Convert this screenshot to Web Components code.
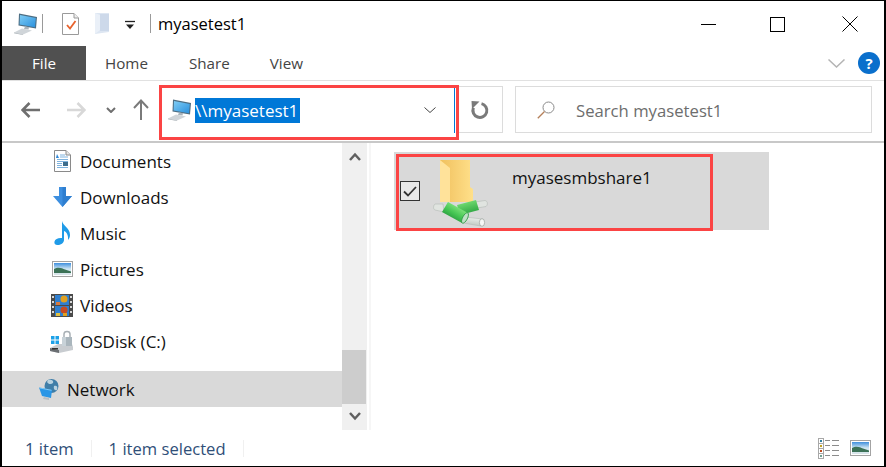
<!DOCTYPE html>
<html><head><meta charset="utf-8"><style>
html,body{margin:0;padding:0;background:#fff}
body{font-family:"Open Sans","Noto Sans",sans-serif;width:886px;height:467px;overflow:hidden}
</style></head><body>
<x-window>
  <x-titlebar title-text="myasetest1"></x-titlebar>
  <x-ribbon></x-ribbon>
  <x-addressbar path="\\myasetest1" search="Search myasetest1"></x-addressbar>
  <x-main>
    <x-navtree slot="nav">
      <x-nav-item icon="docs">Documents</x-nav-item>
      <x-nav-item icon="down">Downloads</x-nav-item>
      <x-nav-item icon="music">Music</x-nav-item>
      <x-nav-item icon="pics">Pictures</x-nav-item>
      <x-nav-item icon="video">Videos</x-nav-item>
      <x-nav-item icon="disk">OSDisk (C:)</x-nav-item>
      <x-nav-item icon="net" selected>Network</x-nav-item>
    </x-navtree>
    <x-file-item slot="content">myasesmbshare1</x-file-item>
  </x-main>
  <x-statusbar></x-statusbar>
</x-window>
<script>
const ICONS={
pc:`<svg width="25" height="22" viewBox="0 0 25 22"><defs><linearGradient id="s" x1="0" y1="0" x2="1" y2="1"><stop offset="0" stop-color="#7fcdf5"/><stop offset="1" stop-color="#2a90dd"/></linearGradient></defs><path d="M6 0.5 24 4 23 15.500 5.500 12.500Z" fill="#4d6d82"/><path d="M7 2 22.800 5 22 14.300 6.600 11.400Z" fill="url(#s)"/><path d="M12 13.500 16 14 15.500 16.500 11 16Z" fill="#aab3ba"/><path d="M1 19.500 9 15.500 19 17.500 10 21.500Z" fill="#d0d5d9"/><path d="M1 19.500 10 21.500 10 22 1 20.300Z" fill="#a3abb1"/></svg>`,
docs:`<svg width="17" height="22" viewBox="0 0 17 22"><path d="M.5.5H12L16.500 5V21.500H.5Z" fill="#fff" stroke="#8a8a8a"/><path d="M12 .5V5H16.500" fill="#e6e6e6" stroke="#8a8a8a"/><path d="M3 4 5 8H2Z" fill="#2c86d8"/><path d="M6 5H11M6 7H14M3 9.500H14M3 11.500H14M3 13.500H8M3 15.500H8M3 17.500H14" stroke="#7fb3de"/><rect x="9" y="12" width="5" height="4" fill="#3d6d8c"/></svg>`,
down:`<svg width="19" height="20" viewBox="0 0 19 20"><path d="M6 0H13V9H19L9.500 20 0 9H6Z" fill="#3d8fe0"/><path d="M9.500 0H13V9H19L9.500 20Z" fill="#2f7fd0"/></svg>`,
music:`<svg width="17" height="24" viewBox="0 0 17 24"><path d="M8 0C9 5 16 7 16 14 16 16 15 18 14 19 14.500 15 13 11 10 10V19C10 22 6.500 24 3.500 24 1 24 0 22.500 .5 20.500 1 18 4.500 16.500 8 17Z" fill="#1f9be8"/></svg>`,
pics:`<svg width="21" height="16" viewBox="0 0 21 16"><rect x=".5" y=".5" width="20" height="15" fill="#fff" stroke="#a3a3a3"/><defs><linearGradient id="p" x1="0" y1="0" x2="0" y2="1"><stop offset="0" stop-color="#3f8fdd"/><stop offset=".5" stop-color="#cfe6f2"/><stop offset="1" stop-color="#d8e4e8"/></linearGradient></defs><rect x="2" y="2" width="17" height="12" fill="url(#p)"/><path d="M2 8C6 5.500 10 7 13 8.500L19 10.500V12H2Z" fill="#3c7257"/></svg>`,
video:`<svg width="22" height="23" viewBox="0 0 22 23"><rect width="22" height="23" fill="#4a4a4a"/><g fill="#d8d8d8"><rect x="1" y="2" width="2" height="2"/><rect x="1" y="7" width="2" height="2"/><rect x="1" y="12" width="2" height="2"/><rect x="1" y="17" width="2" height="2"/><rect x="19" y="2" width="2" height="2"/><rect x="19" y="7" width="2" height="2"/><rect x="19" y="12" width="2" height="2"/><rect x="19" y="17" width="2" height="2"/></g><rect x="4" y="1" width="14" height="10" fill="#2f7fd0"/><rect x="4" y="12" width="14" height="10" fill="#2f7fd0"/><circle cx="13" cy="5" r="3.500" fill="#e0a020"/><circle cx="13" cy="16" r="3.500" fill="#c84a20"/><rect x="5" y="8" width="4" height="3" fill="#d87a40"/><rect x="5" y="19" width="4" height="3" fill="#e0c040"/><rect x="12" y="19" width="4" height="3" fill="#e0a020"/></svg>`,
disk:`<svg width="24" height="23" viewBox="0 0 24 23"><path d="M0 18 8 14H22L23 17V20L9 23 0 21Z" fill="#c8ccd0"/><path d="M0 18 9 20V23L0 21Z" fill="#6b6f73"/><path d="M2 18H8V19.500H2Z" fill="#333"/><g fill="#1da1e8"><rect x="1" y="6" width="3.500" height="3.500"/><rect x="5.500" y="6" width="3.500" height="3.500"/><rect x="1" y="10.500" width="3.500" height="3.500"/><rect x="5.500" y="10.500" width="3.500" height="3.500"/></g><path d="M14 7V4C14 .5 20 .5 20 4V7" fill="none" stroke="#a9b0b5" stroke-width="1.500"/><rect x="12" y="7" width="10" height="9" fill="#c8d2d8"/><rect x="16" y="7" width="6" height="9" fill="#aab6bd"/></svg>`,
net:`<svg width="22" height="21" viewBox="0 0 22 21"><circle cx="12.500" cy="7" r="7" fill="#3f7ea8"/><path d="M9 1C13 0 15 2 14 4 12 6 9 5 8 3ZM15 7C18 6 19 8 18 11 16 12 14 10 15 7Z" fill="#b8d2e0"/><path d="M0 8.500 13 11 12 19 3 17Z" fill="#2a96e6"/><path d="M1 9 12.500 11.300" stroke="#7dc8f5"/><path d="M5 18 10 19 10 21 4 20Z" fill="#b8bec3"/></svg>`,
check:`<svg width="17" height="22" viewBox="0 0 17 22"><path d="M.5.5H12L16.500 5V21.500H.5Z" fill="#fff" stroke="#9a9a9a"/><path d="M12 .5V5H16.500" fill="#eee" stroke="#9a9a9a"/><path d="M5 12 8 15.500 13.500 8" fill="none" stroke="#e8622c" stroke-width="1.800"/></svg>`,
folderpale:`<svg width="15" height="21" viewBox="0 0 15 21"><path d="M0 0H14V19L0 21Z" fill="#dde6f2"/><path d="M5 1H14V18H5Z" fill="#cdd9ea"/><path d="M0 0 5 2V17L0 21Z" fill="#eaf0f8"/></svg>`,
share:`<svg width="56" height="68" viewBox="0 0 56 68"><defs><linearGradient id="f1" x1="0" y1="0" x2="1" y2="0"><stop offset="0" stop-color="#f0c05e"/><stop offset="1" stop-color="#ffe08a"/></linearGradient>
<linearGradient id="ga" gradientUnits="userSpaceOnUse" x1="15" y1="42" x2="9" y2="52"><stop offset="0" stop-color="#74dd74"/><stop offset=".55" stop-color="#46c654"/><stop offset="1" stop-color="#2fa544"/></linearGradient>
<linearGradient id="gb" gradientUnits="userSpaceOnUse" x1="33" y1="42" x2="36" y2="53"><stop offset="0" stop-color="#70da70"/><stop offset="1" stop-color="#33aa46"/></linearGradient>
<linearGradient id="gp" gradientUnits="userSpaceOnUse" x1="40" y1="56" x2="39" y2="65"><stop offset="0" stop-color="#f2f5f2"/><stop offset="1" stop-color="#c2ccc4"/></linearGradient></defs>
<path d="M7 0H37V27L40 29V42H7Z" fill="url(#f1)"/><path d="M7 0 17 8V42H7Z" fill="#ffe29a"/>
<path d="M10 44 2 44 C0 46 0 49 2 50 L11 52Z" fill="#e0e4e0" stroke="#b4bab5" stroke-width=".6"/>
<path d="M42 42 52 40.500 C55 41 55 45 53 46.500 L44 48Z" fill="#e0e4e0" stroke="#b4bab5" stroke-width=".6"/>
<path d="M24 45 43 40 46 50 27 55Z" fill="url(#gb)"/>
<path d="M31 57 50 59 48 66 30 63Z" fill="url(#gp)" stroke="#b4bab5" stroke-width=".6"/>
<ellipse cx="49" cy="62.500" rx="2.600" ry="3.800" fill="#f6f7f6" stroke="#a2a8a3" stroke-width=".8"/>
<path d="M15 42 35 53 29 63 9 52Z" fill="url(#ga)"/>
<ellipse cx="32" cy="58" rx="2.400" ry="5.800" fill="#bfe0c6" stroke="#2c9a42" stroke-width=".8" transform="rotate(28 32 58)"/></svg>`
};
function def(name,html){customElements.define(name,class extends HTMLElement{
  constructor(){super();this.attachShadow({mode:'open'});}
  connectedCallback(){this.shadowRoot.innerHTML=typeof html==='function'?html(this):html;}
});}
def('x-window',`<style>:host{display:flex;flex-direction:column;box-sizing:border-box;width:886px;height:467px;border:solid #000;border-width:1px 2px 1px 2px;background:#fff;position:relative}</style><slot></slot>`);
def('x-titlebar',h=>`<style>
:host{display:flex;align-items:center;height:45px;flex:none;color:#000}
.sep{width:1px;height:19px;background:#9a9a9a}
.t{font-size:16.500px}
svg{display:block}
</style>
<span style="margin:0 0 0 11px;width:25px;height:22px;display:block">${ICONS.pc}</span>
<span class="sep" style="margin-left:4px"></span>
<span style="margin-left:19px">${ICONS.check}</span>
<span style="margin:0 0 0 16px">${ICONS.folderpale}</span>
<svg style="margin:2px 0 0 15px" width="10" height="10" viewBox="0 0 10 10"><path d="M0 1.500H10" stroke="#222" stroke-width="1.300"/><path d="M1 4.500H9L5 9Z" fill="#222"/></svg>
<span class="sep" style="margin-left:15px"></span>
<span class="t" style="margin-left:7px;flex:1">${h.getAttribute('title-text')}</span>
<svg width="15" height="1" style="margin-right:54px;margin-top:1px"><rect width="15" height="1"/></svg>
<svg width="15" height="15" style="margin-right:57px;margin-top:1px"><rect x=".5" y=".5" width="14" height="14" fill="none" stroke="#000"/></svg>
<svg width="16" height="16" style="margin-right:26px;margin-top:1px" viewBox="0 0 16 16"><path d="M.5.5 15.500 15.500M15.500.5 .5 15.500" stroke="#000" stroke-width="1"/></svg>`);
def('x-ribbon',`<style>
:host{display:flex;align-items:stretch;height:35px;flex:none;box-sizing:border-box;border-bottom:1px solid #e1e1e1;font-size:15.200px;color:#444}
.f{width:84px;background:#505050;color:#fff;display:flex;align-items:center;justify-content:center}
.tb{display:flex;align-items:center}
svg{display:block}
</style>
<div class="f">File</div>
<div class="tb" style="margin-left:19px">Home</div>
<div class="tb" style="margin-left:41px">Share</div>
<div class="tb" style="margin-left:40px;flex:1">View</div>
<div class="tb" style="margin-right:13px"><svg width="17" height="9" viewBox="0 0 17 9"><path d="M.5.5 8.500 8 16.500.5" fill="none" stroke="#b4b4b4" stroke-width="1.500"/></svg></div>
<div class="tb" style="margin-right:4px"><svg width="22" height="22" viewBox="0 0 22 22"><circle cx="11" cy="11" r="11" fill="#0a6fcc"/><text x="11" y="16.500" text-anchor="middle" font-family="Open Sans" font-weight="700" font-size="15" fill="#fff">?</text></svg></div>`);
def('x-addressbar',h=>`<style>
:host{display:flex;align-items:center;height:62px;flex:none;box-sizing:border-box;border-bottom:2px solid #c8c8c8;position:relative;padding-bottom:3px}
svg{display:block}
.addr{margin-left:13px;width:297px;height:47px;display:flex;align-items:center;position:relative;box-sizing:border-box;font-size:17px}
.sel{background:#0078d7;color:#fff;height:25px;line-height:25px;margin-left:3px;width:105px;margin-top:1px;box-sizing:border-box;white-space:nowrap}
.red{position:absolute;left:-3px;top:-1px;width:300px;height:55px;box-sizing:border-box;border:3px solid #fb4444;pointer-events:none}
.caret{position:absolute;left:292px;top:1px;width:1px;height:46px;background:#0078d7}
.ref{width:44px;height:47px;box-sizing:border-box;border:1px solid #dcdcdc;border-left:0;display:flex;align-items:center;justify-content:center;padding-right:2px}
.search{margin-left:12px;width:357px;height:47px;box-sizing:border-box;border:1px solid #dcdcdc;display:flex;align-items:center;padding-left:21px;font-size:16.700px;color:#6d6d6d}
</style>
<svg style="margin-left:19px" width="19" height="16" viewBox="0 0 19 16"><path d="M1.500 8H19M8.500 1 1.500 8 8.500 15" fill="none" stroke="#6f6f6f" stroke-width="2.600"/></svg>
<svg style="margin-left:27px" width="19" height="16" viewBox="0 0 19 16"><path d="M0 8H17.500M10.500 1 17.500 8 10.500 15" fill="none" stroke="#d8d8d8" stroke-width="2.600"/></svg>
<svg style="margin-left:20px" width="10" height="6" viewBox="0 0 10 6"><path d="M1 1 5 5 9 1" fill="none" stroke="#6f6f6f" stroke-width="2"/></svg>
<svg style="margin-left:17px" width="16" height="21" viewBox="0 0 16 21"><path d="M8 21V2M1 9 8 1.500 15 9" fill="none" stroke="#7a7a7a" stroke-width="2"/></svg>
<div class="addr">
  <span style="width:25px;margin-left:5px;flex:none">${ICONS.pc}</span>
  <span class="sel">${h.getAttribute('path')}</span>
  <svg style="position:absolute;left:262px;top:21px" width="12" height="6" viewBox="0 0 12 6"><path d="M.5.5 6 5.500 11.500.5" fill="none" stroke="#444" stroke-width="1"/></svg>
  <span class="caret"></span>
  <span class="red"></span>
</div>
<div class="ref"><svg width="20" height="20" viewBox="0 0 20 20"><path d="M11.500 3.600A7 7 0 1 1 3.400 7.800" fill="none" stroke="#7a7a7a" stroke-width="3"/><path d="M1.500 1 9.500 1.500 2 9Z" fill="#7a7a7a"/></svg></div>
<div class="search"><svg width="18" height="18" viewBox="0 0 18 18"><circle cx="11.500" cy="6.500" r="5.500" fill="none" stroke="#8a8a8a"/><path d="M7.500 10.500 .8 17.200" stroke="#b5805a" stroke-width="1.300"/></svg><span style="margin:1px 0 0 21px">${h.getAttribute('search')}</span></div>`);
def('x-main',`<style>:host{display:flex;flex:1;min-height:0}
.n{width:340px;flex:none}.sb{width:25px;flex:none;background:#f0f0f0;display:flex;flex-direction:column;align-items:center;justify-content:space-between;position:relative}
.thumb{position:absolute;left:0;right:1px;top:207px;height:54px;background:#cdcdcd}
.line{width:2px;background:#f6f6f6;margin-left:2px;flex:none}
.c{flex:1;padding:9px 0 0 23px}
svg{display:block}
</style>
<div class="n"><slot name="nav"></slot></div>
<div class="sb"><svg style="margin-top:9px" width="12" height="9" viewBox="0 0 12 9"><path d="M1 8 6 2.500 11 8" fill="none" stroke="#606060" stroke-width="2.500"/></svg><div class="thumb"></div><svg style="margin-bottom:9px;position:relative" width="12" height="9" viewBox="0 0 12 9"><path d="M1 1 6 6.500 11 1" fill="none" stroke="#606060" stroke-width="2.500"/></svg></div>
<div class="line"></div>
<div class="c"><slot name="content"></slot></div>`);
def('x-navtree',`<style>:host{display:flex;flex-direction:column}::slotted(:last-child){margin-top:12px}</style><slot></slot>`);
def('x-nav-item',h=>{const s=h.hasAttribute('selected');return `<style>
:host{display:flex;align-items:center;height:36px;font-size:17px;color:#111;${s?'background:#d9d9d9;':''}}
.i{width:${s?24:26}px;margin-left:${s?36:47}px;margin-right:5px;display:flex;justify-content:center;flex:none}
svg{display:block}
</style><span class="i">${ICONS[h.getAttribute('icon')]}</span><slot></slot>`});
def('x-file-item',`<style>
:host{display:flex;position:relative;box-sizing:border-box;width:375px;height:78px;background:#d9d9d9;font-size:17px;color:#111}
.red{position:absolute;left:2px;top:2px;width:317px;height:77px;box-sizing:border-box;border:3px solid #fb4444;pointer-events:none}
.cb{position:absolute;left:6px;top:29px;width:20px;height:20px;box-sizing:border-box;border:1px solid #333;background:#e8e8e8}
.ic{position:absolute;left:39px;top:8px}
.t{margin:14px 0 0 118px}
svg{display:block}
</style>
<span class="ic">${ICONS.share}</span>
<span class="cb"><svg width="18" height="18" viewBox="0 0 18 18"><path d="M3 9.500 7 13.500 15 5" fill="none" stroke="#333" stroke-width="1.800"/></svg></span>
<span class="t"><slot></slot></span>
<span class="red"></span>`);
def('x-statusbar',`<style>
:host{display:flex;align-items:center;height:36px;flex:none;font-size:16.600px;color:#2f4f78;position:relative}
.s{width:1px;height:17px;background:#f0f0f0}
svg{display:block}
</style>
<span style="margin-left:23px">1 item</span><span class="s" style="margin-left:17px"></span>
<span style="margin-left:17px">1 item selected</span><span class="s" style="margin-left:17px"></span>
<span style="flex:1"></span>
<svg width="21" height="21" viewBox="0 0 21 21"><g fill="#fff" stroke="#a8a8a8"><rect x=".5" y=".5" width="5" height="5"/><rect x=".5" y="5.500" width="5" height="5"/><rect x=".5" y="10.500" width="5" height="5"/><rect x=".5" y="15.500" width="5" height="5"/></g><rect x="2" y="2" width="2" height="2" fill="#2f7fa0"/><rect x="2" y="7" width="2" height="2" fill="#c0a020"/><rect x="2" y="12" width="2" height="2" fill="#c04a20"/><rect x="2" y="17" width="2" height="2" fill="#70a090"/><path d="M7 2.500H12M14 2.500H21M7 7.500H12M14 7.500H21M7 12.500H12M14 12.500H21M7 17.500H12M14 17.500H21" stroke="#8c8c8c"/></svg>
<span style="margin-left:11px;margin-right:13px">${ICONS.pics}</span>`);
</script>
</body></html>
